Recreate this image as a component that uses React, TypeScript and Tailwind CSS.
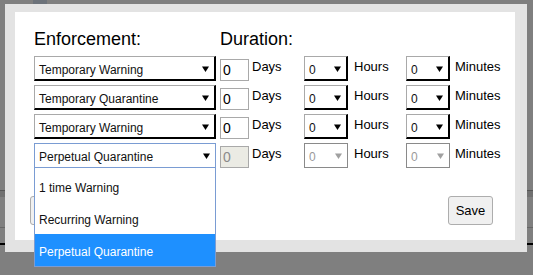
import React from "react";

const rows = [
  { value: "Temporary Warning", disabled: false },
  { value: "Temporary Quarantine", disabled: false },
  { value: "Temporary Warning", disabled: false },
  { value: "Perpetual Quarantine", disabled: true, open: true },
];

const options = ["1 time Warning", "Recurring Warning", "Perpetual Quarantine"];

function Arrow({ disabled }: { disabled?: boolean }) {
  return (
    <svg width="7" height="6" viewBox="0 0 7 6" className="shrink-0">
      <path d="M0 0.5 H7 L3.5 6 Z" fill={disabled ? "#a0a0a0" : "#000"} />
    </svg>
  );
}

function FakeSelect({
  value,
  width,
  disabled,
  focused,
  children,
}: {
  value: string;
  width: string;
  disabled?: boolean;
  focused?: boolean;
  children?: React.ReactNode;
}) {
  const border = focused
    ? "border border-[#7a9cd3]"
    : disabled
      ? "border border-[#8a8a8a]"
      : "border-t border-l border-r-2 border-b-2 border-t-[#a9a9a9] border-l-[#a9a9a9] border-r-black border-b-black";
  return (
    <div className={`relative shrink-0 h-[25px] bg-white ${width} ${border}`}>
      <div className="flex h-full items-start justify-between pl-[4px] pr-[5px] pt-[6px]">
        <span
          className={`text-[12px] leading-[14px] whitespace-nowrap ${
            disabled ? "text-[#9a9a9a]" : "text-[#111]"
          }`}
        >
          {value}
        </span>
        <div className="pt-[3px]">
          <Arrow disabled={disabled} />
        </div>
      </div>
      {children}
    </div>
  );
}

export default function App() {
  return (
    <div
      className="relative w-[533px] h-[275px] overflow-hidden bg-[#7f7f7f]"
      style={{ fontFamily: '"Liberation Sans", Arial, sans-serif' }}
    >
      {/* page behind the overlay */}
      <div className="absolute left-[33px] top-0 h-[4px] w-[14px] bg-[#6c727a]" />
      <div className="absolute left-0 top-[190px] h-[1px] w-full bg-[#555]" />
      <div className="absolute left-0 top-[191px] h-[6px] w-full bg-[#707070]" />
      <div className="absolute left-0 top-[227px] h-[1px] w-full bg-[#666]" />
      <div className="absolute left-0 top-[243px] h-[2px] w-full bg-black" />

      {/* dialog */}
      <div className="relative ml-[5px] mt-[4px] w-[522px] bg-[#e3e3e3] pt-[8px] pl-[10px] pr-[12px] pb-[12px]">
        <div className="w-[500px] bg-white pl-[19px] pt-[17px] pb-[15px]">
          <div className="flex h-[21px] text-[18px] leading-[21px] text-black">
            <span className="w-[186px]">Enforcement:</span>
            <span>Duration:</span>
          </div>

          <div className="mt-[6px] flex flex-col gap-[4px]">
            {rows.map((r, i) => (
              <div key={i} className="flex h-[25px] items-start text-[13px] leading-[16px] text-black">
                <FakeSelect value={r.value} width="w-[182px]" focused={r.open}>
                  {r.open && (
                    <div className="absolute left-[-1px] right-[-1px] top-full z-20 border border-[#7a9cd3] bg-white pt-[2px]">
                      {options.map((o) => (
                        <div
                          key={o}
                          className={`flex h-[32px] items-center pl-[4px] pt-[3px] text-[12px] ${
                            o === r.value ? "bg-[#1e90ff] text-white" : "text-[#111]"
                          }`}
                        >
                          {o}
                        </div>
                      ))}
                    </div>
                  )}
                </FakeSelect>
                <div
                  className={`ml-[4px] mt-[3px] h-[22px] w-[29px] shrink-0 border border-[#a9a9a9] pl-[2px] pt-[2px] text-[14px] leading-[16px] ${
                    r.disabled ? "bg-[#ebebe4] text-[#8a8a8a]" : "bg-white text-black"
                  }`}
                >
                  0
                </div>
                <span className="mt-[3px] w-[55px] shrink-0 pl-[3px]">Days</span>
                <FakeSelect value="0" width="w-[44px]" disabled={r.disabled} />
                <span className="mt-[3px] w-[58px] shrink-0 pl-[6px]">Hours</span>
                <FakeSelect value="0" width="w-[44px]" disabled={r.disabled} />
                <span className="mt-[3px] shrink-0 pl-[5px]">Minutes</span>
              </div>
            ))}
          </div>

          <div className="mt-[28px] flex items-start justify-between pr-[22px] -ml-[4px]">
            {/* cancel button, hidden behind the open list */}
            <button
              aria-label="Cancel"
              className="h-[29px] w-[62px] rounded-[3px] border border-[#adadad] bg-[#f0f0f0]"
            />
            <button className="h-[29px] w-[45px] rounded-[3px] border border-[#adadad] bg-[#f0f0f0] text-[13px] text-black">
              Save
            </button>
          </div>
        </div>
      </div>
    </div>
  );
}
